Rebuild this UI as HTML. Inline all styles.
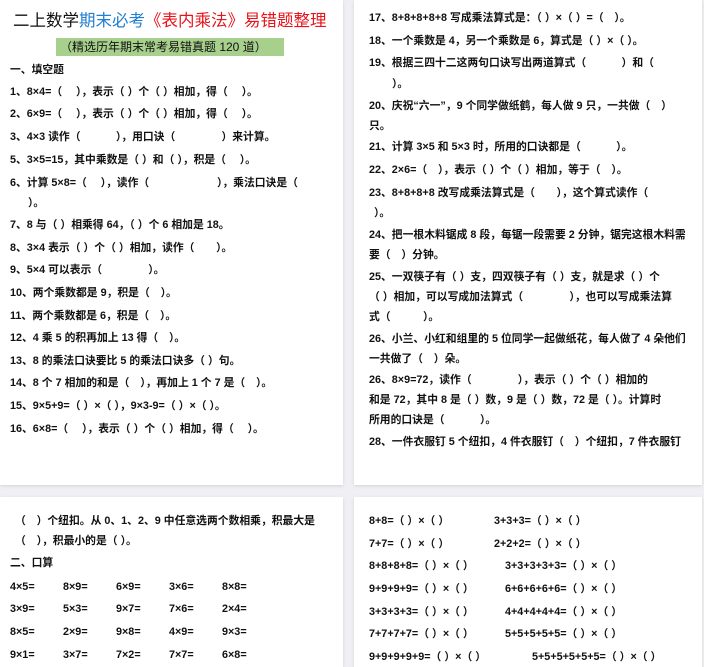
<!DOCTYPE html>
<html><head><meta charset="utf-8"><style>
html,body{margin:0;padding:0}
body{width:704px;height:658px;background:#f0f0f4;position:relative;overflow:hidden;font-family:"Liberation Sans","Noto Sans CJK SC",sans-serif;color:#111}
.pg{position:absolute;background:#fff;box-shadow:0 1px 3px rgba(0,0,0,0.12);overflow:hidden}
.l{position:absolute;font-size:10.8px;font-weight:bold;white-space:nowrap;line-height:14px}
</style></head><body>
<div class="pg" style="left:0;top:0;width:343px;height:485px">
<div class="l" style="left:13px;top:10px;font-size:16.5px;line-height:22px;font-weight:normal;color:#111">二上数学<span style="color:#1f7fd0">期末必考</span><span style="color:#e8141c">《表内乘法》易错题整理</span></div>
<div style="position:absolute;left:56px;top:38px;width:228px;height:18px;background:#a8d08d"></div>
<div class="l" style="left:60px;top:40px;font-size:12px;font-weight:normal">（精选历年期末常考易错真题 120 道）</div>
<div class="l" style="left:10px;top:63px">一、填空题</div>
<div class="l" style="left:10px;top:85px">1、8×4=（　 ），表示（ ）个（ ）相加，得（　 ）。</div>
<div class="l" style="left:10px;top:107px">2、6×9=（　 ），表示（ ）个（ ）相加，得（　 ）。</div>
<div class="l" style="left:10px;top:130px">3、4×3 读作（　　　 ），用口诀（　　　　 ）来计算。</div>
<div class="l" style="left:10px;top:153px">5、3×5=15，其中乘数是（ ）和（ ），积是（　 ）。</div>
<div class="l" style="left:10px;top:176px">6、计算 5×8=（　 ），读作（　　　　　　 ），乘法口诀是（</div>
<div class="l" style="left:28px;top:196px">）。</div>
<div class="l" style="left:10px;top:218px">7、8 与（ ）相乘得 64，（ ）个 6 相加是 18。</div>
<div class="l" style="left:10px;top:241px">8、3×4 表示（ ）个（ ）相加，读作（　　）。</div>
<div class="l" style="left:10px;top:263px">9、5×4 可以表示（　　　　 ）。</div>
<div class="l" style="left:10px;top:286px">10、两个乘数都是 9，积是（　）。</div>
<div class="l" style="left:10px;top:309px">11、两个乘数都是 6，积是（　）。</div>
<div class="l" style="left:10px;top:331px">12、4 乘 5 的积再加上 13 得（　）。</div>
<div class="l" style="left:10px;top:354px">13、8 的乘法口诀要比 5 的乘法口诀多（ ）句。</div>
<div class="l" style="left:10px;top:376px">14、8 个 7 相加的和是（　），再加上 1 个 7 是（　）。</div>
<div class="l" style="left:10px;top:399px">15、9×5+9=（ ）×（ ），9×3-9=（ ）×（ ）。</div>
<div class="l" style="left:10px;top:422px">16、6×8=（　 ），表示（ ）个（ ）相加，得（　 ）。</div>
</div>
<div class="pg" style="left:354px;top:0;width:348px;height:485px">
<div class="l" style="left:15px;top:11px">17、8+8+8+8+8 写成乘法算式是：（ ）×（ ）=（　）。</div>
<div class="l" style="left:15px;top:34px">18、一个乘数是 4，另一个乘数是 6，算式是（ ）×（ ）。</div>
<div class="l" style="left:15px;top:56px">19、根据三四十二这两句口诀写出两道算式（　　　 ）和（</div>
<div class="l" style="left:38px;top:77px">）。</div>
<div class="l" style="left:15px;top:99px">20、庆祝“六一”，9 个同学做纸鹤，每人做 9 只，一共做（　）</div>
<div class="l" style="left:15px;top:119px">只。</div>
<div class="l" style="left:15px;top:140px">21、计算 3×5 和 5×3 时，所用的口诀都是（　　　 ）。</div>
<div class="l" style="left:15px;top:163px">22、2×6=（　），表示（ ）个（ ）相加，等于（　）。</div>
<div class="l" style="left:15px;top:186px">23、8+8+8+8 改写成乘法算式是（　　），这个算式读作（</div>
<div class="l" style="left:20px;top:206px">）。</div>
<div class="l" style="left:15px;top:228px">24、把一根木料锯成 8 段，每锯一段需要 2 分钟，锯完这根木料需</div>
<div class="l" style="left:15px;top:248px">要（　）分钟。</div>
<div class="l" style="left:15px;top:270px">25、一双筷子有（ ）支，四双筷子有（ ）支，就是求（ ）个</div>
<div class="l" style="left:15px;top:290px">（ ）相加，可以写成加法算式（　　　　 ），也可以写成乘法算</div>
<div class="l" style="left:15px;top:310px">式（　　　）。</div>
<div class="l" style="left:15px;top:332px">26、小兰、小红和组里的 5 位同学一起做纸花，每人做了 4 朵他们</div>
<div class="l" style="left:15px;top:352px">一共做了（　）朵。</div>
<div class="l" style="left:15px;top:373px">26、8×9=72，读作（　　　　 ），表示（ ）个（ ）相加的</div>
<div class="l" style="left:15px;top:393px">和是 72，其中 8 是（ ）数，9 是（ ）数，72 是（ ）。计算时</div>
<div class="l" style="left:15px;top:413px">所用的口诀是（　　　 ）。</div>
<div class="l" style="left:15px;top:435px">28、一件衣服钉 5 个纽扣，4 件衣服钉（　）个纽扣，7 件衣服钉</div>
</div>
<div class="pg" style="left:0;top:497px;width:343px;height:170px">
<div class="l" style="left:15px;top:17px">（　）个纽扣。从 0、1、2、9 中任意选两个数相乘，积最大是</div>
<div class="l" style="left:15px;top:37px">（　），积最小的是（ ）。</div>
<div class="l" style="left:10px;top:59px">二、口算</div>
<div class="l" style="left:10px;top:83px">4×5=</div><div class="l" style="left:63px;top:83px">8×9=</div><div class="l" style="left:116px;top:83px">6×9=</div><div class="l" style="left:169px;top:83px">3×6=</div><div class="l" style="left:222px;top:83px">8×8=</div>
<div class="l" style="left:10px;top:105px">3×9=</div><div class="l" style="left:63px;top:105px">5×3=</div><div class="l" style="left:116px;top:105px">9×7=</div><div class="l" style="left:169px;top:105px">7×6=</div><div class="l" style="left:222px;top:105px">2×4=</div>
<div class="l" style="left:10px;top:128px">8×5=</div><div class="l" style="left:63px;top:128px">2×9=</div><div class="l" style="left:116px;top:128px">9×8=</div><div class="l" style="left:169px;top:128px">4×9=</div><div class="l" style="left:222px;top:128px">9×3=</div>
<div class="l" style="left:10px;top:151px">9×1=</div><div class="l" style="left:63px;top:151px">3×7=</div><div class="l" style="left:116px;top:151px">7×2=</div><div class="l" style="left:169px;top:151px">7×7=</div><div class="l" style="left:222px;top:151px">6×8=</div>
</div>
<div class="pg" style="left:354px;top:497px;width:348px;height:170px">
<div class="l" style="left:15px;top:17px">8+8=（ ）×（ ）</div><div class="l" style="left:140px;top:17px">3+3+3=（ ）×（ ）</div>
<div class="l" style="left:15px;top:40px">7+7=（ ）×（ ）</div><div class="l" style="left:140px;top:40px">2+2+2=（ ）×（ ）</div>
<div class="l" style="left:15px;top:62px">8+8+8+8=（ ）×（ ）</div><div class="l" style="left:151px;top:62px">3+3+3+3+3=（ ）×（ ）</div>
<div class="l" style="left:15px;top:85px">9+9+9+9=（ ）×（ ）</div><div class="l" style="left:151px;top:85px">6+6+6+6+6=（ ）×（ ）</div>
<div class="l" style="left:15px;top:108px">3+3+3+3=（ ）×（ ）</div><div class="l" style="left:151px;top:108px">4+4+4+4+4=（ ）×（ ）</div>
<div class="l" style="left:15px;top:130px">7+7+7+7=（ ）×（ ）</div><div class="l" style="left:151px;top:130px">5+5+5+5+5=（ ）×（ ）</div>
<div class="l" style="left:15px;top:153px">9+9+9+9+9=（ ）×（ ）</div><div class="l" style="left:178px;top:153px">5+5+5+5+5+5=（ ）×（ ）</div>
</div>
</body></html>
